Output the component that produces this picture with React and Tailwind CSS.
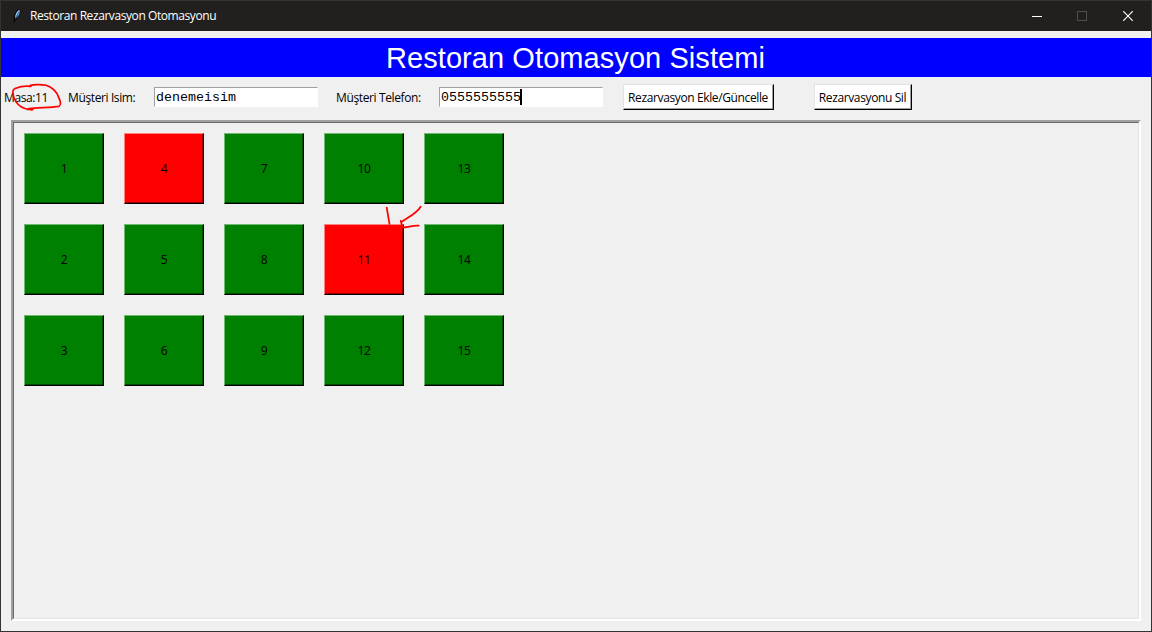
const TABLES = Array.from({ length: 15 }, (_, i) => i + 1);
const RESERVED = new Set([4, 11]);

function Feather() {
  return (
    <svg width="16" height="16" viewBox="0 0 16 16" className="shrink-0">
      <path d="M4.6 15L4.7 10C5 6 7.5 1.7 10.8 1.1C12.6 3.5 10.8 9.5 6.5 12L5 15Z" fill="#050505" />
      <path d="M6 10.8C5.6 7 7.8 3 10.7 1.8C11.6 4.8 10 9 6 10.8Z" fill="#4a8bd0" />
      <path d="M6.3 9.2C6.5 6.3 8.3 3.1 10.5 2.1L9.2 5.5Z" fill="#b9d8f5" />
      <path d="M9.8 3.5L6.4 10.6" stroke="#173d70" strokeWidth="0.7" />
    </svg>
  );
}

function TitleBar() {
  return (
    <header className="flex h-[30px] shrink-0 items-center bg-[#21201e] pl-2 text-white">
      <Feather />
      <h1 className="ml-[5px] grow whitespace-nowrap text-[12px] leading-4 tracking-[-0.42px]">Restoran Rezarvasyon Otomasyonu</h1>
      <div className="flex h-full">
        <button className="flex w-[45px] items-center justify-center" aria-label="Küçült">
          <svg width="10" height="10" shapeRendering="crispEdges"><path d="M0 5.5H10" stroke="#fff" /></svg>
        </button>
        <button className="flex w-[46px] items-center justify-center" aria-label="Büyüt">
          <svg width="10" height="10" shapeRendering="crispEdges"><path d="M.5 .5H9.5V9.5H.5Z" fill="none" stroke="#4f4e4d" /></svg>
        </button>
        <button className="flex w-[46px] items-center justify-center" aria-label="Kapat">
          <svg width="10" height="10"><path d="M.2 .2L9.8 9.8M9.8 .2L.2 9.8" stroke="#fff" strokeWidth="1.2" /></svg>
        </button>
      </div>
    </header>
  );
}

function Entry({ value, focused }) {
  return (
    <div className="flex h-5 w-[164px] shrink-0 items-center border border-t-[#a0a0a0] border-r-white border-b-white border-l-[#a0a0a0] bg-white pl-px font-['Liberation_Mono',monospace] text-[13.33px] leading-4 tracking-normal">
      <span className="pt-0.5">{value}</span>
      {focused && <span className="-ml-px h-4 w-0.5 bg-black" />}
    </div>
  );
}

function ActionButton({ className, children }) {
  return (
    <button className={"h-[26px] shrink-0 border border-t-[#e3e3e3] border-r-black border-b-black border-l-[#e3e3e3] " + className}>
      <span className="flex h-full items-center justify-center whitespace-nowrap border-r border-b border-[#a0a0a0] bg-white pt-[3px]">
        {children}
      </span>
    </button>
  );
}

function TableButton({ number }) {
  const reserved = RESERVED.has(number);
  return (
    <button className={"border border-r-black border-b-black " + (reserved ? "border-t-[#ff8080] border-l-[#ff8080]" : "border-t-[#72b872] border-l-[#72b872]")}>
      <span className={"flex h-full items-center justify-center border-r border-b pt-0.5 pl-px " + (reserved ? "border-[#990000] bg-[#ff0000]" : "border-[#004d00] bg-[#008000]")}>
        {number}
      </span>
    </button>
  );
}

function Annotations() {
  return (
    <svg className="pointer-events-none absolute -top-px -left-px" width="1152" height="632" fill="none" stroke="#fe0000" strokeWidth="1.7" strokeLinecap="round" strokeLinejoin="round">
      <path d="M31 86.5C26 85.8 19 87 15 88.5C11.5 90 12.5 94 14 98C16 103 20 107 25 108.5L32 110M27 109.5L33 109.3M29 108.5C38 107.5 51 107.5 59 106.3C61.5 105 60.5 101 58.5 97C57 92 52 87 46 85.3C41 84 31 84.5 29.5 86" />
      <path d="M386.7 207.5L389.5 224M420.7 206.7C416 214 409 216.5 401 222.3L400.7 220.8M401 222.3L403 227.5C408 227.5 412 225.3 418.7 225.7" />
    </svg>
  );
}

export default function App() {
  return (
    <div className="relative flex h-[632px] w-[1152px] flex-col overflow-hidden border border-[#333333] bg-[#f0f0f0] font-['Open_Sans','Noto_Sans',sans-serif] text-[12px] leading-4 tracking-[-0.38px] text-black">
      <TitleBar />
      <h2 className="mt-[7px] flex h-[39px] shrink-0 items-center justify-center bg-[#0000ff] pr-px font-['Liberation_Sans',sans-serif] text-[29px] leading-8 tracking-[0.07px] text-white">
        Restoran Otomasyon Sistemi
      </h2>
      <div className="flex h-10 shrink-0 items-center whitespace-nowrap pl-[3px]">
        <span className="w-16 pt-px">Masa:11</span>
        <label className="w-[86px] pt-px">Müşteri Isim:</label>
        <Entry value="denemeisim" />
        <label className="ml-[18px] w-[85px] pt-px">Müşteri Telefon:</label>
        <div className="ml-[18px]"><Entry value="0555555555" focused /></div>
        <ActionButton className="ml-5 w-[151px]">Rezarvasyon Ekle/Güncelle</ActionButton>
        <ActionButton className="ml-10 w-[98px]">Rezarvasyonu Sil</ActionButton>
      </div>
      <main className="mx-[10px] mt-[3px] mb-[10px] grow border-2 border-t-[#a0a0a0] border-r-white border-b-white border-l-[#a0a0a0]">
        <div className="h-full border border-t-[#696969] border-r-[#e3e3e3] border-b-[#e3e3e3] border-l-[#696969] p-[10px]">
          <div className="grid grid-flow-col grid-cols-[repeat(5,80px)] grid-rows-[repeat(3,71px)] gap-5">
            {TABLES.map((n) => <TableButton key={n} number={n} />)}
          </div>
        </div>
      </main>
      <Annotations />
    </div>
  );
}
